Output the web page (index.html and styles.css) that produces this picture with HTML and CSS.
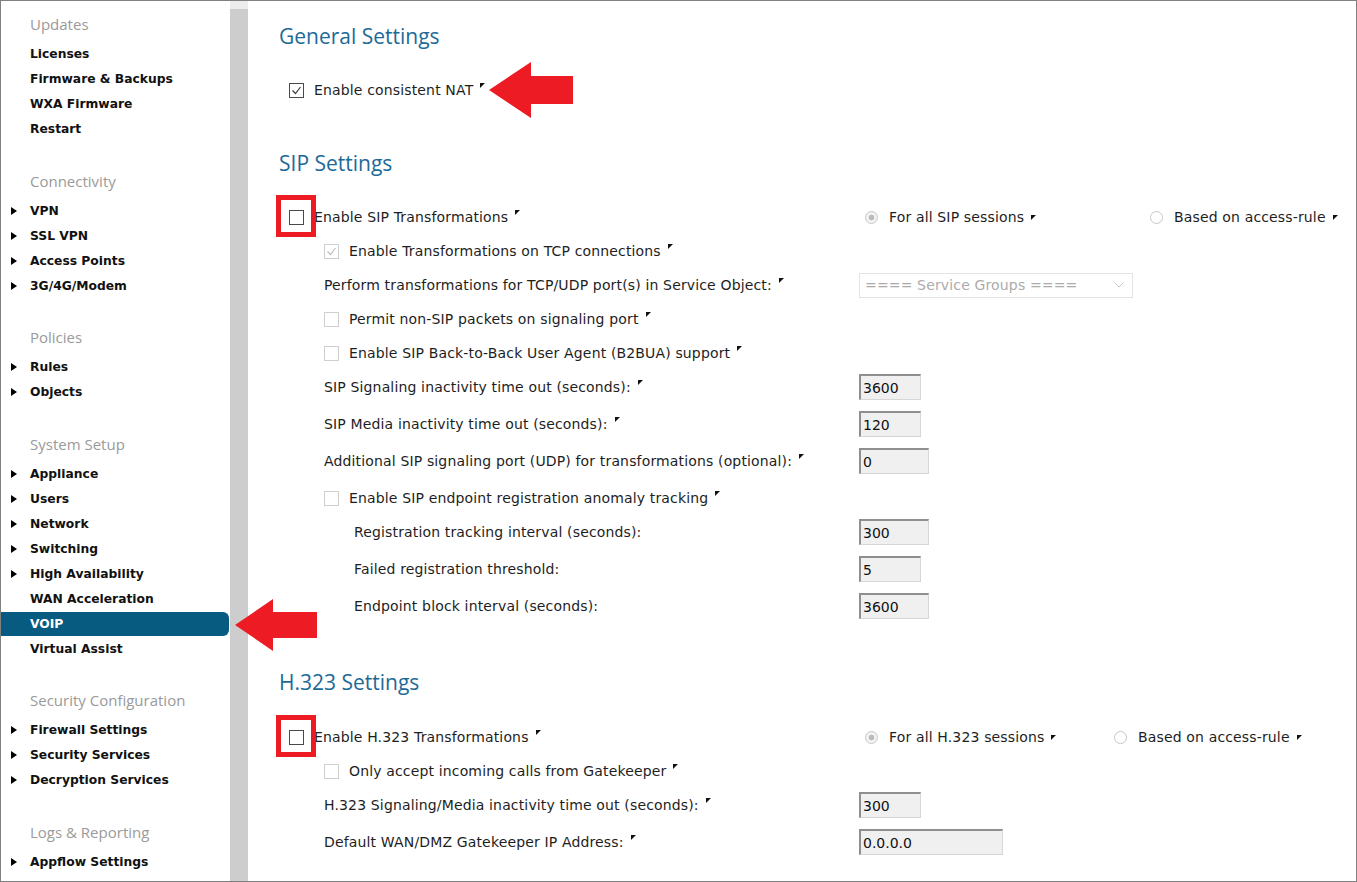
FILE: index.html
```html
<!DOCTYPE html>
<html lang="en">
<head>
    <meta charset="UTF-8">
    <title>VOIP Settings</title>
    <link rel="stylesheet" href="styles.css">
</head>
<body>
    <div class="frame">
        <nav class="sidebar">
            <div class="nav-group">
                <div class="nav-title">Updates</div>
                <ul class="nav-list">
                    <li class="nav-item">Licenses</li>
                    <li class="nav-item">Firmware &amp; Backups</li>
                    <li class="nav-item">WXA Firmware</li>
                    <li class="nav-item">Restart</li>
                </ul>
            </div>
            <div class="nav-group">
                <div class="nav-title">Connectivity</div>
                <ul class="nav-list">
                    <li class="nav-item folder">VPN</li>
                    <li class="nav-item folder">SSL VPN</li>
                    <li class="nav-item folder">Access Points</li>
                    <li class="nav-item folder">3G/4G/Modem</li>
                </ul>
            </div>
            <div class="nav-group">
                <div class="nav-title">Policies</div>
                <ul class="nav-list">
                    <li class="nav-item folder">Rules</li>
                    <li class="nav-item folder">Objects</li>
                </ul>
            </div>
            <div class="nav-group">
                <div class="nav-title">System Setup</div>
                <ul class="nav-list">
                    <li class="nav-item folder">Appliance</li>
                    <li class="nav-item folder">Users</li>
                    <li class="nav-item folder">Network</li>
                    <li class="nav-item folder">Switching</li>
                    <li class="nav-item folder">High Availability</li>
                    <li class="nav-item">WAN Acceleration</li>
                    <li class="nav-item active">VOIP
                        <svg class="pointer pointer-nav" width="82" height="52" viewBox="0 0 82 52"><polygon points="0,26 38,0 38,13 82,13 82,39 38,39 38,52" fill="#ed1c24"/></svg>
                    </li>
                    <li class="nav-item">Virtual Assist</li>
                </ul>
            </div>
            <div class="nav-group">
                <div class="nav-title">Security Configuration</div>
                <ul class="nav-list">
                    <li class="nav-item folder">Firewall Settings</li>
                    <li class="nav-item folder">Security Services</li>
                    <li class="nav-item folder">Decryption Services</li>
                </ul>
            </div>
            <div class="nav-group">
                <div class="nav-title">Logs &amp; Reporting</div>
                <ul class="nav-list">
                    <li class="nav-item folder">Appflow Settings</li>
                </ul>
            </div>
        </nav>

        <div class="scrollbar"><div class="scroll-cap"></div></div>

        <main class="content">
            <section class="settings">
                <h2 class="settings-title">General Settings</h2>
                <div class="row top">
                    <span class="cb checked"><svg viewBox="0 0 13 13"><polyline points="2.5,6.5 5.5,9.5 10.5,3"/></svg></span>
                    <span class="label">Enable consistent NAT<i class="tip"></i></span>
                    <svg class="pointer pointer-nat" width="84" height="56" viewBox="0 0 84 56"><polygon points="0,28 42,0 42,14 84,14 84,42 42,42 42,56" fill="#ed1c24"/></svg>
                </div>
            </section>

            <section class="settings">
                <h2 class="settings-title">SIP Settings</h2>
                <div class="row field top">
                    <div class="cell">
                        <span class="cb flagged"></span>
                        <span class="label">Enable SIP Transformations<i class="tip"></i></span>
                    </div>
                    <div class="radio-group">
                        <label class="radio-opt sip-first"><span class="radio on"></span>For all SIP sessions<i class="tip"></i></label>
                        <label class="radio-opt"><span class="radio"></span>Based on access-rule<i class="tip"></i></label>
                    </div>
                </div>
                <div class="row sub">
                    <span class="cb off checked"><svg viewBox="0 0 13 13"><polyline points="2.5,6.5 5.5,9.5 10.5,3"/></svg></span>
                    <span class="label">Enable Transformations on TCP connections<i class="tip"></i></span>
                </div>
                <div class="row field sub">
                    <span class="label">Perform transformations for TCP/UDP port(s) in Service Object:<i class="tip"></i></span>
                    <div class="select">
                        <span>==== Service Groups ====</span>
                        <svg width="10" height="6" viewBox="0 0 10 6"><polyline points="0.5,0.5 5,5 9.5,0.5"/></svg>
                    </div>
                </div>
                <div class="row sub">
                    <span class="cb off"></span>
                    <span class="label">Permit non-SIP packets on signaling port<i class="tip"></i></span>
                </div>
                <div class="row sub">
                    <span class="cb off"></span>
                    <span class="label">Enable SIP Back-to-Back User Agent (B2BUA) support<i class="tip"></i></span>
                </div>
                <div class="row field tall sub">
                    <span class="label">SIP Signaling inactivity time out (seconds):<i class="tip"></i></span>
                    <input class="text-input w-s" type="text" value="3600" readonly>
                </div>
                <div class="row field tall sub">
                    <span class="label">SIP Media inactivity time out (seconds):<i class="tip"></i></span>
                    <input class="text-input w-s" type="text" value="120" readonly>
                </div>
                <div class="row field tall sub">
                    <span class="label">Additional SIP signaling port (UDP) for transformations (optional):<i class="tip"></i></span>
                    <input class="text-input w-m" type="text" value="0" readonly>
                </div>
                <div class="row sub">
                    <span class="cb off"></span>
                    <span class="label">Enable SIP endpoint registration anomaly tracking<i class="tip"></i></span>
                </div>
                <div class="row field tall nested">
                    <span class="label">Registration tracking interval (seconds):</span>
                    <input class="text-input w-m" type="text" value="300" readonly>
                </div>
                <div class="row field tall nested">
                    <span class="label">Failed registration threshold:</span>
                    <input class="text-input w-s" type="text" value="5" readonly>
                </div>
                <div class="row field tall nested">
                    <span class="label">Endpoint block interval (seconds):</span>
                    <input class="text-input w-m" type="text" value="3600" readonly>
                </div>
            </section>

            <section class="settings">
                <h2 class="settings-title spaced">H.323 Settings</h2>
                <div class="row field top">
                    <div class="cell">
                        <span class="cb flagged"></span>
                        <span class="label">Enable H.323 Transformations<i class="tip"></i></span>
                    </div>
                    <div class="radio-group">
                        <label class="radio-opt h323-first"><span class="radio on"></span>For all H.323 sessions<i class="tip"></i></label>
                        <label class="radio-opt"><span class="radio"></span>Based on access-rule<i class="tip"></i></label>
                    </div>
                </div>
                <div class="row sub">
                    <span class="cb off"></span>
                    <span class="label">Only accept incoming calls from Gatekeeper<i class="tip"></i></span>
                </div>
                <div class="row field tall sub">
                    <span class="label">H.323 Signaling/Media inactivity time out (seconds):<i class="tip"></i></span>
                    <input class="text-input w-s" type="text" value="300" readonly>
                </div>
                <div class="row field tall sub">
                    <span class="label">Default WAN/DMZ Gatekeeper IP Address:<i class="tip"></i></span>
                    <input class="text-input w-l" type="text" value="0.0.0.0" readonly>
                </div>
            </section>
        </main>
    </div>
</body>
</html>
```

FILE: styles.css
```css
* {
    box-sizing: border-box;
    margin: 0;
    padding: 0;
}

body {
    margin: 0;
    background: #fff;
    font-family: "DejaVu Sans", sans-serif;
    font-size: 14px;
    letter-spacing: 0.15px;
    color: #1e1e1e;
    overflow: hidden;
}

.frame {
    width: 1357px;
    height: 882px;
    border: 1px solid #808080;
    display: flex;
    overflow: hidden;
    position: relative;
}

/* left navigation */
.sidebar {
    width: 229px;
    flex: none;
    padding-top: 8px;
    position: relative;
    z-index: 2;
    letter-spacing: 0;
}

.nav-group {
    margin-bottom: 23.5px;
}

.nav-title {
    height: 30px;
    line-height: 30px;
    margin-bottom: 3px;
    padding-left: 29px;
    font-family: "Open Sans", sans-serif;
    font-size: 15px;
    color: #9a9a9a;
}

.nav-list {
    list-style: none;
}

.nav-item {
    height: 25px;
    line-height: 25px;
    padding-left: 29px;
    font-weight: bold;
    font-size: 12.3px;
    color: #111;
    position: relative;
}

.nav-item.folder::before {
    content: "";
    position: absolute;
    left: 10px;
    top: 8px;
    border-left: 6px solid #000;
    border-top: 4.5px solid transparent;
    border-bottom: 4.5px solid transparent;
}

.nav-item.active {
    height: 24px;
    line-height: 24px;
    margin: 0 1px 1px 0;
    background: #075a80;
    color: #fff;
    border-radius: 0 6px 6px 0;
}

.pointer {
    position: absolute;
    display: block;
}

.pointer-nav {
    left: 234px;
    top: -13px;
}

.scrollbar {
    width: 18px;
    flex: none;
    background: #cdcdcd;
}

.scroll-cap {
    height: 8px;
    background: #ededed;
}

/* settings area */
.content {
    flex: 1;
    padding: 21px 0 0 31px;
}

.settings {
    margin-bottom: 42px;
}

.settings-title {
    font-family: "Open Sans", sans-serif;
    font-size: 21px;
    font-weight: normal;
    letter-spacing: 0;
    line-height: 28px;
    color: #1d6a97;
    margin-bottom: 23px;
}

.settings-title.spaced {
    margin-bottom: 24px;
}

.row {
    display: flex;
    align-items: center;
    height: 34px;
    position: relative;
}

/* rows holding a text box keep their extra room below */
.row.tall {
    height: 37px;
    padding-bottom: 3px;
}

.row.field {
    display: grid;
    grid-template-columns: 580px auto;
    align-items: center;
}

.row.top {
    padding-left: 10px;
}

.row.top.field {
    padding-left: 0;
}

.row.top .cell {
    padding-left: 10px;
    display: flex;
    align-items: center;
}

.row.sub {
    padding-left: 45px;
}

.row.field.sub,
.row.field.nested {
    padding-left: 0;
}

.row.field.sub .label {
    padding-left: 45px;
}

.row.field.nested .label {
    padding-left: 75px;
}

.label {
    white-space: nowrap;
}

.tip {
    display: inline-block;
    width: 0;
    height: 0;
    margin-left: 7px;
    border-top: 5px solid #111;
    border-right: 5px solid transparent;
    vertical-align: 7px;
}

.pointer-nat {
    left: 210px;
    top: -11px;
}

/* check boxes */
.cb {
    width: 15px;
    height: 15px;
    flex: none;
    margin-right: 10px;
    border: 1px solid #4a4a4a;
    background: #fff;
    display: inline-flex;
}

.cb svg {
    width: 13px;
    height: 13px;
    fill: none;
    stroke: #3c3c3c;
    stroke-width: 1.2;
}

.cb.off {
    border-color: #cfcfcf;
}

.cb.off svg {
    stroke: #bdbdbd;
}

.cb.flagged {
    position: relative;
}

.cb.flagged::after {
    content: "";
    position: absolute;
    box-sizing: border-box;
    left: -14px;
    top: -16px;
    width: 40px;
    height: 42px;
    border: 5px solid #ed1c24;
}

/* radio options */
.radio-group {
    display: flex;
    align-items: center;
    padding-left: 6px;
}

.radio-opt {
    display: flex;
    align-items: center;
    white-space: nowrap;
}

.radio-opt.sip-first {
    width: 285px;
}

.radio-opt.h323-first {
    width: 249px;
}

.radio {
    width: 13px;
    height: 13px;
    flex: none;
    margin-right: 11px;
    border: 1px solid #c6c6c6;
    border-radius: 50%;
    background: #fff;
}

.radio.on {
    background: radial-gradient(circle, #bcbcbc 0 2.6px, #f3f3f3 3.2px);
}

/* inputs */
.text-input {
    height: 26px;
    padding: 0 2px;
    background: #f0f0f0;
    border: 1px solid #d6d6d6;
    border-top: 2px solid #8f8f8f;
    border-left: 2px solid #8f8f8f;
    font-family: "DejaVu Sans", sans-serif;
    font-size: 14px;
    color: #111;
    outline: none;
}

.w-s {
    width: 62px;
}

.w-m {
    width: 70px;
}

.w-l {
    width: 144px;
}

.select {
    width: 274px;
    height: 25px;
    border: 1px solid #e3e3e3;
    display: flex;
    align-items: center;
    justify-content: space-between;
    padding: 0 8px 0 5px;
    color: #ababab;
}

.select svg {
    fill: none;
    stroke: #c4c4c4;
    stroke-width: 1;
}
```
